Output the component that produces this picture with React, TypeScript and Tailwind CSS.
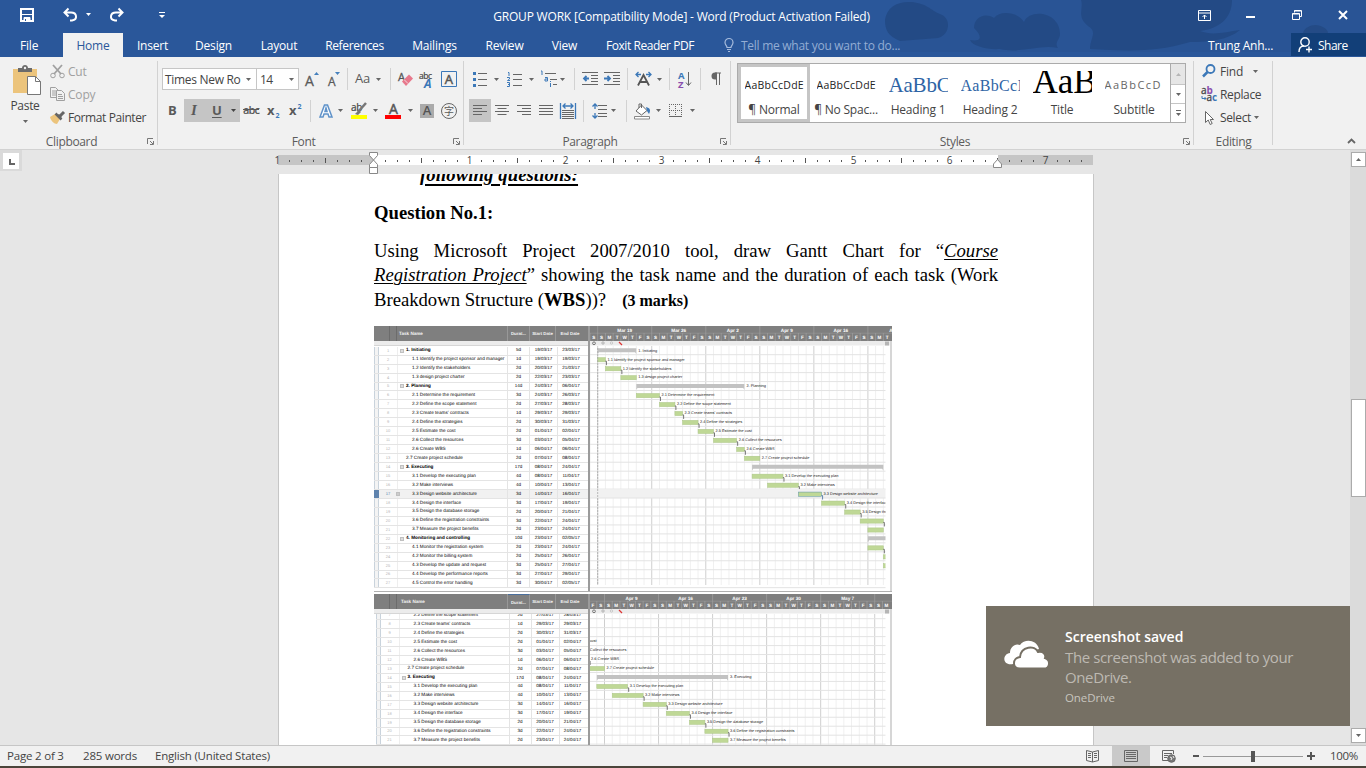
import React from "react";

const DAY = 7.72;
const ROW = 8.96;

type Task = {
  n: number;
  name: string;
  level: 0 | 1 | 2;
  dur: string;
  start: string;
  end: string;
  from: number;
  to: number;
};

const t = (
  n: number,
  name: string,
  level: 0 | 1 | 2,
  dur: string,
  start: string,
  end: string,
  from: number,
  to: number
): Task => ({ n, name, level, dur, start, end, from, to });

const TASKS: Task[] = [
  t(1, "1. Initiating", 0, "5d", "19/03/17", "23/03/17", 0, 5),
  t(2, "1.1 Identify the project sponsor and manager", 2, "1d", "19/03/17", "19/03/17", 0, 1),
  t(3, "1.2 Identify the stakeholders", 2, "2d", "20/03/17", "21/03/17", 1, 3),
  t(4, "1.3 design project charter", 2, "2d", "22/03/17", "23/03/17", 3, 5),
  t(5, "2. Planning", 0, "14d", "24/03/17", "06/04/17", 5, 19),
  t(6, "2.1 Determine the requirement", 2, "3d", "24/03/17", "26/03/17", 5, 8),
  t(7, "2.2 Define the scope statement", 2, "2d", "27/03/17", "28/03/17", 8, 10),
  t(8, "2.3 Create teams' contracts", 2, "1d", "29/03/17", "29/03/17", 10, 11),
  t(9, "2.4 Define the strategies", 2, "2d", "30/03/17", "31/03/17", 11, 13),
  t(10, "2.5 Estimate the cost", 2, "2d", "01/04/17", "02/04/17", 13, 15),
  t(11, "2.6 Collect the resources", 2, "3d", "03/04/17", "05/04/17", 15, 18),
  t(12, "2.6 Create WBS", 2, "1d", "06/04/17", "06/04/17", 18, 19),
  t(13, "2.7 Create project schedule", 1, "2d", "07/04/17", "08/04/17", 19, 21),
  t(14, "3. Executing", 0, "17d", "08/04/17", "24/04/17", 20, 37),
  t(15, "3.1 Develop the executing plan", 2, "4d", "08/04/17", "11/04/17", 20, 24),
  t(16, "3.2 Make interviews", 2, "4d", "10/04/17", "13/04/17", 22, 26),
  t(17, "3.3 Design website architecture", 2, "3d", "14/04/17", "16/04/17", 26, 29),
  t(18, "3.4 Design the interface", 2, "3d", "17/04/17", "19/04/17", 29, 32),
  t(19, "3.5 Design the database storage", 2, "2d", "20/04/17", "21/04/17", 32, 34),
  t(20, "3.6 Define the registration constraints", 2, "3d", "22/04/17", "24/04/17", 34, 37),
  t(21, "3.7 Measure the project benefits", 2, "2d", "23/04/17", "24/04/17", 35, 37),
  t(22, "4. Monitoring and controlling", 0, "10d", "23/04/17", "02/05/17", 35, 45),
  t(23, "4.1 Monitor the registration system", 2, "2d", "23/04/17", "24/04/17", 35, 37),
  t(24, "4.2 Monitor the billing system", 2, "2d", "25/04/17", "26/04/17", 37, 39),
  t(25, "4.3 Develop the update and request", 2, "3d", "25/04/17", "27/04/17", 37, 40),
  t(26, "4.4 Develop the performance reports", 2, "3d", "27/04/17", "29/04/17", 39, 42),
  t(27, "4.5 Control the error handling", 2, "3d", "30/04/17", "02/05/17", 42, 45),
];

const LETTERS = ["S", "M", "T", "W", "T", "F", "S"];

/* ---------- Task sheet and Gantt drawing ---------- */

function TaskRow({ task, selected }: { task: Task; selected: boolean }) {
  return (
    <div
      className={
        "flex h-[8.96px] shrink-0 items-center border-b border-[#e4e4e4] leading-none whitespace-nowrap text-black " +
        (selected ? "bg-[#f1f1f1]" : "")
      }
    >
      <span className={"h-full w-[5px] " + (selected ? "bg-[#5f83ad]" : "border-x border-[#c9d3dc] bg-[#f4f4f4]")} />
      <span className={"w-[18px] text-center text-[4px] " + (selected ? "text-[#4b79ad]" : "text-[#b5b5b5]")}>{task.n}</span>
      <span className="flex h-full w-[9px] items-center justify-end border-l border-[#eeeeee] pr-[2px]">
        {task.level === 0 && <span className="h-[4px] w-[4px] border border-[#c0c0c0] bg-[#ddd]" />}
        {selected && <span className="mr-[4px] h-[4px] w-[4px] shrink-0 border border-[#c0c0c0] bg-[#ccc]" />}
      </span>
      <span
        className={
          "flex h-full w-[102px] items-center border-r border-[#e4e4e4] text-[4.66px] " +
          (task.level === 2 ? "pl-[6px]" : task.level === 0 ? "font-bold" : "")
        }
      >
        {task.name}
      </span>
      <span className="flex h-full w-[22px] items-center justify-center border-r border-[#e4e4e4] text-[4.5px]">{task.dur}</span>
      <span className="flex h-full w-[28px] items-center justify-center border-r border-[#e4e4e4] text-[4.5px]">{task.start}</span>
      <span className="flex h-full w-[26px] items-center justify-center text-[4.5px]">{task.end}</span>
    </div>
  );
}

function Sheet({ tasks, second }: { tasks: Task[]; second?: boolean }) {
  return (
    <div className="flex w-[214px] shrink-0 flex-col overflow-hidden bg-white">
      <div className="flex h-[15px] shrink-0 items-center bg-[#7f7f7f] text-[4.6px] leading-none font-bold whitespace-nowrap text-[#f4f4f4]">
        <span className="h-full w-[16px] border-r border-[#6c6c6c]" />
        <span className="h-full w-[7px] border-r border-[#6c6c6c]" />
        <span className={"flex h-full w-[111px] items-center border-r border-[#989898] pt-[2px] " + (second ? "pl-[4px]" : "pl-[2px]")}>
          Task Name
        </span>
        <span
          className={
            "flex h-full w-[22px] items-center justify-center border-r border-[#989898] pt-[2px] text-[4.4px] " +
            (second ? "border-t border-t-[#4b6f9c]" : "")
          }
        >
          Durat...
        </span>
        <span className="flex h-full w-[26px] items-center justify-center border-r border-[#989898] pt-[2px] text-[4.4px]">Start Date</span>
        <span className="flex h-full w-[28px] items-center justify-center pt-[2px] text-[4.4px]">End Date</span>
      </div>
      <div className="h-[5px] shrink-0 border-b border-[#d6d6d6] bg-[#ececec]" />
      <div className="flex flex-col overflow-hidden">
        <div className={"flex flex-col " + (second ? "mt-[-2.9px] pl-[1.5px]" : "pt-[0.7px]")}>
          {tasks.map((k) => (
            <TaskRow key={k.n} task={k} selected={!second && k.n === 17} />
          ))}
        </div>
      </div>
    </div>
  );
}

function Gantt({
  tasks,
  origin,
  firstRow,
  weeks,
  height,
  rowStart,
}: {
  tasks: Task[];
  origin: number;
  firstRow: number;
  weeks: { day: number; label: string }[];
  height: number;
  rowStart: number;
}) {
  const X = (d: number) => origin + d * DAY;
  const firstDay = Math.ceil(-origin / DAY) - 1;
  const days = Array.from({ length: 40 }, (_, i) => firstDay + i).filter((d) => X(d) < 303);
  const id = "clip" + firstRow;
  return (
    <svg
      width="304"
      height={height}
      className="block shrink-0 bg-white [text-rendering:geometricPrecision]"
      fontFamily="Liberation Sans, sans-serif"
    >
      <defs>
        <clipPath id={id}>
          <rect x="2" y="15" width="295.5" height={height - 15} />
        </clipPath>
      </defs>
      <g clipPath={`url(#${id})`}>
        {days.map((d) => (
          <line key={d} x1={X(d)} x2={X(d)} y1="20" y2={firstRow === 1 ? 259 : height} stroke={d % 7 === 0 ? "#cfcfcf" : "#f0f0f0"} />
        ))}
        {tasks.map((k, i) => {
          const cy = rowStart + i * ROW;
          return (
            <g key={k.n}>
              {k.n === 17 && firstRow === 1 && <rect x="2" y={cy - 4.5} width="296" height={ROW} fill="#f1f1f1" />}
              <line x1="2" x2="298" y1={cy + 4.5} y2={cy + 4.5} stroke="#e3e3e3" />
              {k.level === 0 ? (
                <path
                  d={`M${X(k.from)} ${cy - 2}H${X(k.to)}V${cy + 3.8}L${X(k.to) - 1.2} ${cy + 2}H${X(k.from) + 1.2}L${X(k.from)} ${cy + 3.8}Z`}
                  fill="#c2c2c2"
                />
              ) : (
                <rect
                  x={X(k.from)}
                  y={cy - 1.5}
                  width={(k.to - k.from) * DAY}
                  height="4.2"
                  fill="#bfd896"
                  stroke={k.n === 17 && firstRow === 1 ? "#5b93a0" : "#abc686"}
                  strokeWidth=".5"
                />
              )}
              {k.level !== 0 && ![4, 13, 21].includes(k.n) && (
                <path
                  d={`M${X(k.to)} ${cy + 2}h1v4`}
                  fill="none"
                  stroke={k.n === 17 && firstRow === 1 ? "#3c6aa0" : "#555"}
                  strokeWidth=".8"
                />
              )}
              {X(k.to) < 295 && (
                <text x={X(k.to) + 2} y={cy + 1.4} fontSize="3.9" fill="#222">
                  {k.name}
                </text>
              )}
            </g>
          );
        })}
        {firstRow === 1 && (
          <line x1={X(0)} x2={X(0)} y1="22" y2="259" stroke="#a8a8a8" strokeDasharray="2 1" strokeWidth=".8" />
        )}
      </g>
      <rect x="2" width="302" height="15" fill="#7f7f7f" />
      <rect x="2" y="15" width="302" height="4.5" fill="#ececec" />
      <line x1="2" x2="304" y1="7.2" y2="7.2" stroke="#9a9a9a" strokeWidth=".6" />
      {days.map((d) => (
        <g key={d}>
          <line x1={X(d)} x2={X(d)} y1={d % 7 === 0 ? 0 : 7} y2="15" stroke="#a5a5a5" strokeWidth=".6" />
          {X(d) + 4 > 3 && X(d) + 5 < 304 && (
            <text x={X(d) + 3.9} y="12.8" fontSize="4.6" fontWeight="bold" fill="#fff" textAnchor="middle">
              {LETTERS[((d % 7) + 7) % 7]}
            </text>
          )}
        </g>
      ))}
      {weeks.map((w) => (
        <text key={w.label} x={X(w.day) + 27} y="5.6" fontSize="4.7" fontWeight="bold" fill="#fff" textAnchor="middle">
          {w.label}
        </text>
      ))}
      <circle cx="6" cy="17.3" r="1.4" fill="none" stroke="#777" />
      <circle cx="15" cy="17" r="1.2" fill="none" stroke="#999" strokeWidth=".7" />
      <circle cx="23.5" cy="17" r="1.2" fill="none" stroke="#bbb" strokeWidth=".7" />
      <path d="M31 16l3 3" stroke="#d33" strokeWidth="1.3" />
      <rect x="297" y="15.5" width="4" height="4" fill="#b5b5b5" />
      <rect x="0" width="2" height={height} fill="#9b9b9b" />
      <rect x="302" y="15" width="2" height={height} fill="#d6d6d6" />
    </svg>
  );
}

/* ---------- Small pieces ---------- */

function Caret({ className = "", fill = "#666" }: { className?: string; fill?: string }) {
  return (
    <svg width="5" height="3" viewBox="0 0 5 3" className={"shrink-0 " + className}>
      <path d="M0 0H5L2.5 3Z" fill={fill} />
    </svg>
  );
}

function Ic({ w = 16, h = 16, className = "", children }: { w?: number; h?: number; className?: string; children: React.ReactNode }) {
  return (
    <svg
      width={w}
      height={h}
      viewBox={`0 0 ${w} ${h}`}
      className={"shrink-0 overflow-visible " + className}
      fill="none"
      stroke="#666"
      fontFamily="Open Sans, sans-serif"
    >
      {children}
    </svg>
  );
}

const Sep = ({ className = "" }: { className?: string }) => <span className={"h-[22px] w-px shrink-0 bg-[#d2d2d2] " + className} />;

function Launcher({ className = "" }: { className?: string }) {
  return (
    <Ic w={7} h={7} className={className}>
      <path d="M.5 6V.5H6M3 3l3 3M6.5 3v3.500H3" stroke="#777" />
    </Ic>
  );
}

function GroupLabel({ label, launcher }: { label: string; launcher?: boolean }) {
  return (
    <div className="mt-auto flex h-[16px] w-full shrink-0 items-center">
      <span className={"flex-1 pt-[1px] text-center tracking-[-0.35px] text-[#5c5c5c] " + (launcher ? "-ml-[4px]" : "")}>{label}</span>
      {launcher && <Launcher className="mr-[4px]" />}
    </div>
  );
}

function Lines({ ws, right, center }: { ws: number[]; right?: boolean; center?: boolean }) {
  return (
    <Ic w={14} h={12}>
      {ws.map((w, i) => {
        const x = right ? 14 - w : center ? (14 - w) / 2 : 0;
        return <path key={i} d={`M${x} ${i * 3 + 0.5}h${w}`} />;
      })}
    </Ic>
  );
}

/* ---------- Title bar and tabs ---------- */

function TitleBar() {
  const tabs: [string, string][] = [
    ["Insert", "w-[59px]"],
    ["Design", "w-[63px]"],
    ["Layout", "w-[68px]"],
    ["References", "w-[83px] tracking-[-0.35px]"],
    ["Mailings", "w-[77px]"],
    ["Review", "w-[63px]"],
    ["View", "w-[57px]"],
    ["Foxit Reader PDF", "w-[114px] tracking-[-0.45px]"],
  ];
  return (
    <header className="relative h-[57px] shrink-0 bg-[#2a579a] text-white">
      <svg className="absolute top-0 right-0" width="500" height="57" viewBox="866 0 500 57">
        <rect x="900" width="466" height="52" fill="#27528f" opacity=".5" />
        <g fill="#234a84" opacity=".9">
          <path d="M885 20C887 7 897 1 912 2C928 4 930 10 940 14C952 18 950 35 938 38L900 41C888 36 885 30 885 20Z" />
          <path d="M974 28C974 18 984 12 994 18C1000 10 1018 12 1024 22C1030 8 1060 12 1060 34C1060 40 1054 42 1058 48C1040 44 1020 54 1000 49C988 50 972 46 970 40C980 42 984 38 974 28Z" />
          <path d="M1081 0H1232C1232 14 1224 28 1200 31C1212 36 1226 32 1240 30C1228 40 1210 42 1190 42C1150 54 1120 50 1090 49C1090 38 1098 32 1088 26C1076 16 1084 8 1081 0Z" />
          <path d="M1303 33C1304 28 1310 25 1316 25C1324 26 1328 30 1328 33Z" />
        </g>
      </svg>
      <div className="relative flex h-[33px] items-center">
        <Ic w={14} h={14} className="mt-[8px] ml-[20px] self-start">
          <path d="M1 1h12v12H1z" stroke="#fff" strokeWidth="2" />
          <path d="M2 6.500h10M4 9.500h6V13H4z" fill="#fff" stroke="#fff" />
          <path d="M5.500 11v2" stroke="#2a579a" />
        </Ic>
        <Ic w={15} h={14} className="mt-[-3px] ml-[29px]">
          <path d="M5.500.500L1.500 4.500l4 4M2 4.500h6c6 0 7 7 1 8H7" stroke="#fff" strokeWidth="2" />
        </Ic>
        <Caret fill="#fff" className="mt-[-4px] ml-[8px]" />
        <Ic w={15} h={14} className="mt-[-3px] ml-[18px]">
          <path d="M9.500.500l4 4-4 4M13 4.500H7c-6 0-7 7-1 8h2" stroke="#fff" strokeWidth="2" />
        </Ic>
        <Ic w={6} h={7} className="mt-[-3px] ml-[35px]">
          <path d="M0 .5h6" stroke="#fff" />
          <path d="M0 3h6L3 6z" fill="#fff" stroke="none" />
        </Ic>
        <span className="ml-[308px] w-[417px] text-center text-[12px] tracking-[-0.19px] whitespace-nowrap">
          GROUP WORK [Compatibility Mode] - Word (Product Activation Failed)
        </span>
        <Ic w={13} h={11} className="mt-[-3px] ml-[308px]">
          <path d="M.5.500h12v10H.5zM.5 3h12" stroke="#fff" />
          <path d="M6.500 9V5M4.500 7l2-2 2 2" stroke="#fff" />
        </Ic>
        <span className="ml-[35px] h-[2px] w-[9px] bg-white" />
        <Ic w={10} h={10} className="mt-[-3px] ml-[37px]">
          <path d="M2.500 2.500V.5h7v6h-2M.5 3.500h7v6h-7zM.5 4h7M2 1h7" stroke="#fff" />
        </Ic>
        <Ic w={10} h={10} className="mt-[-3px] ml-[36px]">
          <path d="M1 1l8 8M9 1L1 9" stroke="#fff" strokeWidth="2" />
        </Ic>
      </div>
      <nav className="relative flex h-[24px] items-center text-[12px] tracking-[-0.2px] whitespace-nowrap">
        <span className="w-[63px] pt-[2px] pl-[20px]">File</span>
        <span className="flex h-full w-[60px] items-center justify-center bg-[#f1f1f1] pt-[1px] text-[#2a579a]">Home</span>
        {tabs.map(([label, w]) => (
          <span key={label} className={"shrink-0 pt-[1px] text-center " + w}>
            {label}
          </span>
        ))}
        <Ic w={10} h={14} className="ml-[17px]">
          <path d="M3 9.500C3 7.500 1 7 1 4.500a4 4 0 0 1 8 0C9 7 7 7.500 7 9.500zM3 11.500h4M4 13.500h2" stroke="#a6bbdc" strokeWidth="1.200" />
        </Ic>
        <span className="ml-[7px] w-[467px] pt-[1px] tracking-[-0.27px] text-[#93add4]">Tell me what you want to do...</span>
        <span className="w-[83px] pt-[1px]">Trung Anh...</span>
        <span className="flex h-[23px] flex-1 items-center self-start bg-[#123f78] pl-[7px]">
          <Ic w={15} h={16}>
            <circle cx="7" cy="5" r="4.200" stroke="#fff" strokeWidth="1.400" />
            <path d="M1 15c0-4 2-6 5-6M8 12.500h6M11 9.500v6" stroke="#fff" strokeWidth="1.400" />
          </Ic>
          <span className="ml-[5px] pt-[2px] tracking-[-0.5px]">Share</span>
        </span>
      </nav>
    </header>
  );
}

/* ---------- Ribbon ---------- */

function Clipboard() {
  return (
    <section className="flex w-[158px] shrink-0 flex-col">
      <div className="flex h-[74px]">
        <div className="flex w-[50px] flex-col items-center pt-[8px]">
          <Ic w={29} h={31} className="ml-[4px]">
            <path d="M0 4h24v24H0z" fill="#ecc47c" stroke="none" />
            <path d="M5 6V3h4c0-4 6-4 6 0h4v4H5z" fill="#6b6b6b" stroke="none" />
            <circle cx="12" cy="3" r="1.200" fill="#f1f1f1" stroke="none" />
            <path d="M14.500 11.500h8l5 5v13h-13z" fill="#fff" stroke="#777" />
            <path d="M22.500 11.500v5h5" stroke="#777" />
          </Ic>
          <span className="mt-[1px] leading-[18px] tracking-[-0.3px] text-[#444]">Paste</span>
          <Caret className="mt-[5px]" />
        </div>
        <div className="flex flex-col pt-[3px]">
          <div className="flex h-[23px] items-center gap-[3px] text-[#a0a0a0]">
            <Ic w={15} h={15}>
              <path d="M3 1l8 9M12 1L4 10" stroke="#a0a0a0" strokeWidth="1.800" />
              <circle cx="3" cy="11.500" r="2.300" stroke="#a0a0a0" />
              <circle cx="12" cy="11.500" r="2.300" stroke="#a0a0a0" />
            </Ic>
            <span className="pt-[1px]">Cut</span>
          </div>
          <div className="flex h-[23px] items-center gap-[3px] text-[#a0a0a0]">
            <Ic w={15} h={15}>
              <path d="M.5.500h5l3 3v7h-8zM2 4h4M2 6h4M2 8h4" stroke="#a0a0a0" />
              <path d="M6.500 3.500h5l3 3v7h-8z" fill="#f1f1f1" stroke="#a0a0a0" />
              <path d="M8 7.500h4M8 9.500h5M8 11.500h5" stroke="#a0a0a0" />
            </Ic>
            <span className="pt-[1px]">Copy</span>
          </div>
          <div className="flex h-[23px] items-center gap-[3px] text-[#444]">
            <Ic w={15} h={15}>
              <path d="M0 7l5-3 5 5-3 5c-3 0-6-3-7-7z" fill="#ecc47c" stroke="none" />
              <path d="M5.500 3.500l6 6M8 5l3 3" stroke="#666" strokeWidth="2.500" />
              <path d="M9 7l5-5" stroke="#666" strokeWidth="3" />
            </Ic>
            <span className="pt-[1px] tracking-[-0.4px]">Format Painter</span>
          </div>
        </div>
      </div>
      <GroupLabel label="Clipboard" launcher />
    </section>
  );
}

function FontGroup() {
  return (
    <section className="flex w-[306px] shrink-0 flex-col">
      <div className="mt-[11px] flex h-[22px] items-center">
        <div className="ml-[4px] flex h-[22px] w-[95px] items-center justify-between border border-[#c6c6c6] bg-white pr-[5px] pl-[2px] whitespace-nowrap">
          <span className="pt-[1px] tracking-[-0.3px]">Times New Ro</span>
          <Caret />
        </div>
        <div className="ml-[-1px] flex h-[22px] w-[43px] items-center justify-between border border-[#c6c6c6] bg-white pr-[4px] pl-[3px]">
          <span className="pt-[1px] tracking-[-0.6px]">14</span>
          <Caret />
        </div>
        <Ic w={14} h={17} className="ml-[6px]">
          <text x="0" y="14.500" fontSize="14" fill="#5a5a5a" stroke="#5a5a5a" strokeWidth=".3">A</text>
          <path d="M9 4l2.500-3L14 4z" fill="#4580bd" stroke="none" />
        </Ic>
        <Ic w={14} h={17} className="ml-[8px]">
          <text x="1" y="14.500" fontSize="12" fill="#5a5a5a" stroke="#5a5a5a" strokeWidth=".3">A</text>
          <path d="M8 1l2.500 3L13 1z" fill="#4580bd" stroke="none" />
        </Ic>
        <Sep className="ml-[6px]" />
        <span className="ml-[7px] w-[17px] text-[13px] text-[#5a5a5a]">Aa</span>
        <Caret className="ml-[4px]" />
        <Sep className="ml-[9px]" />
        <Ic w={15} h={16} className="ml-[7px]">
          <text x="0" y="10" fontSize="11" fill="#555" stroke="#555" strokeWidth=".3">A</text>
          <path d="M4 10.500l7-7 4 4-7 7.500z" fill="#e8788c" stroke="none" />
          <path d="M6 8.500l4 4" stroke="#f1f1f1" strokeWidth=".8" />
        </Ic>
        <Ic w={15} h={17} className="ml-[6px]">
          <text x="0" y="8" fontSize="8.500" letterSpacing="-.4" fill="#444" stroke="#444" strokeWidth=".2">abc</text>
          <text x="5" y="17" fontSize="12" fontWeight="bold" fontStyle="italic" fill="#3c78b8" stroke="none">A</text>
        </Ic>
        <Ic w={16} h={16} className="ml-[7px]">
          <path d="M.5.500h15v15H.5z" stroke="#3c78b8" />
          <text x="3.700" y="13" fontSize="13" fill="#555" stroke="#555" strokeWidth=".5">A</text>
        </Ic>
      </div>
      <div className="mt-[9px] flex h-[23px] items-center text-[#5a5a5a]">
        <span className="ml-[10px] w-[16px] text-[13px] font-bold">B</span>
        <div className="flex h-[23px] w-[56px] items-center bg-[#c5c5c5]">
          <span className="ml-[7px] w-[15px] font-['Liberation_Serif'] text-[15px] font-bold italic">I</span>
          <span className="ml-[6px] w-[9px] text-[13px] font-bold underline underline-offset-2">U</span>
          <Caret className="ml-[10px]" fill="#444" />
        </div>
        <span className="ml-[3px] w-[17px] text-[11px] font-semibold tracking-[-0.9px] line-through">abc</span>
        <Ic w={14} h={16} className="ml-[7px]">
          <text x="0" y="11.500" fontSize="13" fontWeight="bold" fill="#5a5a5a" stroke="none">x</text>
          <text x="8.500" y="15" fontSize="7" fontWeight="bold" fill="#3c78b8" stroke="none">2</text>
        </Ic>
        <Ic w={14} h={16} className="ml-[8px]">
          <text x="0" y="11.500" fontSize="13" fontWeight="bold" fill="#5a5a5a" stroke="none">x</text>
          <text x="8.500" y="6" fontSize="7" fontWeight="bold" fill="#3c78b8" stroke="none">2</text>
        </Ic>
        <Sep className="ml-[7px]" />
        <Ic w={14} h={16} className="ml-[8px]">
          <path d="M1 14L5.500 2h3L13 14h-3l-1-3H5l-1 3zM6 8.500h2L7 5z" fill="#fff" stroke="#5f92c9" strokeWidth="1.500" />
        </Ic>
        <Caret className="ml-[5px]" />
        <Ic w={17} h={17} className="ml-[7px]">
          <text x="1" y="8.500" fontSize="10" letterSpacing="-.3" fill="#444" stroke="#444" strokeWidth=".2">ab</text>
          <path d="M16 1L8 10" stroke="#777" strokeWidth="2.500" />
          <path d="M5 12l4-4 2 2-3 3z" fill="#777" stroke="none" />
          <path d="M1 13h16v4H1z" fill="#ffff00" stroke="none" />
        </Ic>
        <Caret className="ml-[6px]" />
        <Ic w={17} h={17} className="ml-[7px]">
          <text x="4" y="12" fontSize="14" fill="#555" stroke="#555" strokeWidth=".5">A</text>
          <path d="M0 13h16v4H0z" fill="#f00" stroke="none" />
        </Ic>
        <Caret className="ml-[6px]" />
        <span className="ml-[7px] flex h-[14px] w-[14px] shrink-0 items-center justify-center bg-[#ababab] text-[13px] font-semibold text-[#555]">A</span>
        <span className="ml-[7px] flex h-[16px] w-[16px] shrink-0 items-center justify-center rounded-full border border-[#666] font-['Noto_Sans_CJK_SC'] text-[10px] leading-none tracking-normal">
          字
        </span>
      </div>
      <GroupLabel label="Font" launcher />
    </section>
  );
}

function ParagraphGroup() {
  return (
    <section className="flex w-[267px] shrink-0 flex-col">
      <div className="mt-[11px] flex h-[22px] items-center">
        <Ic w={14} h={16} className="ml-[9px]">
          <path d="M5 2.500h9M5 8.500h9M5 14.500h9" />
          <path d="M0 1h3v3H0zM0 7h3v3H0zM0 13h3v3H0z" fill="#3c78b8" stroke="none" />
        </Ic>
        <Caret className="ml-[7px]" />
        <Ic w={15} h={16} className="ml-[8px]">
          <path d="M6 3.500h9M6 8.500h9M6 14.500h9" />
          <path d="M1 1.500h1V5M0 6.500h2.500v1.500L.5 9.500H3M0 11.500h2.500v4H0M1 13.500h1" stroke="#3c78b8" />
        </Ic>
        <Caret className="ml-[7px]" />
        <Ic w={17} h={16} className="ml-[6px]">
          <path d="M5 2.500h11M10 8.500h7M13 13.500h4" />
          <path d="M1 0h1v4M5 6.500h2.500V10H5V8h2M10.500 10v1M10.500 12v4" stroke="#3c78b8" />
        </Ic>
        <Caret className="ml-[3px]" />
        <Sep className="ml-[9px]" />
        <Ic w={16} h={14} className="ml-[7px]">
          <path d="M0 .5h16M9 3.500h7M9 6.500h7M9 9.500h7M0 12.500h16" />
          <path d="M7 6.500H2M4.500 4L2 6.500 4.500 9" stroke="#3c78b8" strokeWidth="1.800" />
        </Ic>
        <Ic w={16} h={14} className="ml-[6px]">
          <path d="M0 .5h16M9 3.500h7M9 6.500h7M9 9.500h7M0 12.500h16" />
          <path d="M0 6.500h5.500M3.500 4L6 6.500 3.500 9" stroke="#3c78b8" strokeWidth="1.800" />
        </Ic>
        <Sep className="ml-[7px]" />
        <Ic w={17} h={16} className="ml-[7px]">
          <path d="M3 14.500L8.500 4 14 14.500M5 11h7" stroke="#555" strokeWidth="1.800" />
          <path d="M6 3.500H1.500M3.500 1L1 3.500 3.500 6M11 3.500h4.500M13.500 1L16 3.500 13.500 6" stroke="#3c78b8" strokeWidth="1.300" />
        </Ic>
        <Caret className="ml-[5px]" />
        <Sep className="ml-[7px]" />
        <Ic w={14} h={17} className="ml-[8px]">
          <text x="0" y="8" fontSize="9.500" fontWeight="bold" fill="#3c78b8" stroke="none">A</text>
          <text x="0" y="16.500" fontSize="9.500" fontWeight="bold" fill="#8a4fae" stroke="none">Z</text>
          <path d="M10.500 1v13M8 11.500l2.500 3 2.500-3" />
        </Ic>
        <Sep className="ml-[8px]" />
        <Ic w={11} h={14} className="ml-[10px]">
          <path d="M5.500 1v12M8.500 1v12M4 1h6" />
          <path d="M6 .5H4a3.500 3.500 0 0 0 0 7h2z" fill="#666" stroke="none" />
        </Ic>
      </div>
      <div className="mt-[9px] flex h-[23px] items-center">
        <span className="ml-[5px] flex h-[23px] w-[22px] items-center justify-center bg-[#c5c5c5]">
          <Lines ws={[14, 9, 14, 9]} />
        </span>
        <span className="flex w-[22px] justify-center">
          <Lines ws={[14, 9, 14, 9]} center />
        </span>
        <span className="flex w-[22px] justify-center">
          <Lines ws={[14, 9, 14, 9]} right />
        </span>
        <span className="flex w-[22px] justify-center">
          <Lines ws={[14, 14, 14, 14]} />
        </span>
        <Ic w={16} h={16} className="ml-[3px]">
          <path d="M.5 0v16M15.500 0v16M3 3h10M5.500.500L3 3l2.500 2.500M10.500.500L13 3l-2.500 2.500" stroke="#3c78b8" strokeWidth="1.300" />
          <path d="M2 7.500h12M2 9.500h12M2 11.500h12M2 13.500h12M2 15.500h12" />
        </Ic>
        <Sep className="ml-[7px]" />
        <Ic w={15} h={16} className="ml-[8px]">
          <path d="M6 2.500h9M6 6.500h9M6 10.500h9M6 13.500h9" />
          <path d="M3 1v5M.5 3.500L3 1l2.500 2.500M3 15v-5M.5 12.500L3 15l2.500-2.500" stroke="#3c78b8" strokeWidth="1.300" />
        </Ic>
        <Caret className="ml-[4px]" />
        <Sep className="ml-[10px]" />
        <Ic w={17} h={16} className="ml-[7px]">
          <path d="M2 8l5.500-6L13 7.500 7.500 12zM5 5V1h2.500v4" fill="#fff" />
          <path d="M12 4c4 1 5 3 3 7l-2-3z" fill="#3c78b8" stroke="none" />
          <path d="M.5 13.500h15V16H.5z" stroke="#888" fill="#fff" />
        </Ic>
        <Caret className="ml-[5px]" />
        <Ic w={13} h={13} className="ml-[8px]">
          <path d="M.5 0v12M12.500 0v12M6.500 0v12M0 .5h13M0 6.500h13" strokeDasharray="1 1" />
          <path d="M0 12.500h13" />
        </Ic>
        <Caret className="ml-[8px]" />
      </div>
      <GroupLabel label="Paragraph" launcher />
    </section>
  );
}

function StylesGroup() {
  const items: { label: string; sample: string; cls: string }[] = [
    { label: "¶ Normal", sample: "AaBbCcDdE", cls: "text-[10.5px] text-[#222] tracking-[0.25px]" },
    { label: "¶ No Spac...", sample: "AaBbCcDdE", cls: "text-[10.5px] text-[#222] tracking-[0.25px]" },
    { label: "Heading 1", sample: "AaBbC", cls: "font-['Liberation_Serif'] text-[21px] text-[#2e64a5]" },
    { label: "Heading 2", sample: "AaBbCcI", cls: "font-['Liberation_Serif'] text-[16px] tracking-[0.3px] text-[#2e64a5]" },
    { label: "Title", sample: "AaB", cls: "mt-[-9px] font-['Liberation_Serif'] text-[35px] leading-none tracking-[0px] text-black" },
    { label: "Subtitle", sample: "AaBbCcD", cls: "text-[11px] text-[#666] tracking-[1.5px]" },
  ];
  return (
    <section className="flex w-[463px] shrink-0 flex-col">
      <div className="mt-[6px] ml-[6px] flex h-[60px] w-[449px] border border-[#ababab] bg-white">
        <div className="flex flex-1 overflow-hidden">
          {items.map((it, i) => (
            <div
              key={it.label}
              className={
                "flex h-[58px] w-[72px] shrink-0 flex-col items-center " +
                (i === 0 ? "border-[3px] border-[#c5c5c5] pt-[4px]" : "pt-[7px]")
              }
            >
              <div className="flex h-[28px] w-[59px] shrink-0 items-center overflow-hidden pt-[1px] whitespace-nowrap">
                <span className={it.cls}>{it.sample}</span>
              </div>
              <span className="leading-[22px] whitespace-nowrap text-[#444]">{it.label}</span>
            </div>
          ))}
        </div>
        <div className="flex w-[15px] flex-col border-l border-[#ababab]">
          <div className="flex h-[20px] items-center justify-center bg-[#e6e6e6]">
            <Caret className="rotate-180" fill="#b5b5b5" />
          </div>
          <div className="flex h-[20px] items-center justify-center border-y border-[#c5c5c5]">
            <Caret />
          </div>
          <div className="flex flex-1 flex-col items-center justify-center gap-[2px]">
            <span className="h-px w-[5px] bg-[#666]" />
            <Caret />
          </div>
        </div>
      </div>
      <GroupLabel label="Styles" launcher />
    </section>
  );
}

function EditingGroup() {
  return (
    <section className="flex w-[79px] shrink-0 flex-col">
      <div className="flex flex-col pt-[3px] pl-[8px] text-[#444]">
        <div className="flex h-[23px] items-center">
          <Ic w={14} h={15}>
            <circle cx="8.500" cy="5" r="4" stroke="#3c78b8" strokeWidth="1.800" />
            <path d="M5.500 8l-4.500 4.500" stroke="#3c78b8" strokeWidth="2.500" />
          </Ic>
          <span className="ml-[4px] w-[23px] pt-[1px]">Find</span>
          <Caret className="ml-[10px]" />
        </div>
        <div className="flex h-[23px] items-center">
          <Ic w={17} h={17} className="ml-[-1px]">
            <text x="0" y="7.500" fontSize="10" fill="#444" stroke="#444" strokeWidth=".3">a</text>
            <text x="5.500" y="7.500" fontSize="10" fontWeight="bold" fill="#8a4fae" stroke="none">b</text>
            <text x="5.500" y="15" fontSize="10" fill="#444" stroke="#444" strokeWidth=".3">a</text>
            <text x="11" y="15" fontSize="10" fontWeight="bold" fill="#3c78b8" stroke="none">c</text>
            <path d="M1 10v2.500h4M3.500 11l1.500 1.500L3.500 14" stroke="#3c78b8" />
          </Ic>
          <span className="ml-[2px] pt-[1px] tracking-[-0.35px]">Replace</span>
        </div>
        <div className="flex h-[23px] items-center">
          <Ic w={14} h={16}>
            <path d="M3.500 1.500v11l2.700-2.500 2 4.500 2-1-2-4h3.300z" fill="#fff" />
          </Ic>
          <span className="ml-[4px] w-[31px] pt-[1px] tracking-[-0.35px]">Select</span>
          <Caret className="ml-[3px]" />
        </div>
      </div>
      <GroupLabel label="Editing" />
    </section>
  );
}

function Ribbon() {
  const Div = () => <span className="-ml-px mt-[4px] h-[84px] w-px shrink-0 bg-[#d2d2d2]" />;
  return (
    <div className="flex h-[93px] shrink-0 border-b border-[#d2d2d2] bg-[#f1f1f1] text-[12px] tracking-[-0.2px] text-[#444]">
      <Clipboard />
      <Div />
      <FontGroup />
      <Div />
      <ParagraphGroup />
      <Div />
      <StylesGroup />
      <Div />
      <EditingGroup />
      <Div />
      <Ic w={9} h={6} className="mt-auto mr-[10px] mb-[5px] ml-auto">
        <path d="M1 5l3.500-3.500L8 5" strokeWidth="1.800" />
      </Ic>
    </div>
  );
}

/* ---------- Document ---------- */

function Ruler() {
  const ticks = Array.from({ length: 68 }, (_, i) => i - 8);
  return (
    <svg width="816" height="24" viewBox="278 150 816 24" className="block shrink-0 overflow-visible" fontFamily="Open Sans, sans-serif">
      <rect x="278" y="155" width="96" height="10" fill="#c5c5c5" />
      <rect x="374" y="155" width="624" height="10" fill="#fff" />
      <rect x="998" y="155" width="95" height="10" fill="#c5c5c5" />
      {ticks.map((i) => {
        const x = Math.round(373.5 + i * 12) - 1;
        if (i === 0 || x < 280 || x > 1086) return null;
        if (i % 8 === 0)
          return (
            <text key={i} x={x + 0.5} y="164" fontSize="10" textAnchor="middle" fill="#444">
              {Math.abs(i / 8)}
            </text>
          );
        return <rect key={i} x={x} y={i % 4 === 0 ? 158 : 160} width="1" height={i % 4 === 0 ? 5 : 2} fill="#555" />;
      })}
      <text x="274.500" y="164" fontSize="10" fill="#444">1</text>
      <g fill="#fff" stroke="#888">
        <path d="M369.500 152.500h8v3l-4 4.500-4-4.500zM373.500 160l4 4.500v3h-8v-3zM369.500 167.500h8v6h-8z" />
        <path d="M997.500 159.500l4 4.500v3.500h-8v-3.500z" />
      </g>
    </svg>
  );
}

function Picture({ children, className }: { children: React.ReactNode; className: string }) {
  return (
    <div
      className={
        "flex w-[518px] shrink-0 overflow-hidden font-['Liberation_Sans'] [text-rendering:geometricPrecision] " + className
      }
    >
      {children}
    </div>
  );
}

function Page() {
  return (
    <article className="flex h-[571px] w-[816px] shrink-0 flex-col overflow-hidden border-x border-[#c6c6c6] bg-white pl-[95px] font-['Liberation_Serif'] text-[18.67px] leading-[24px] text-black">
      <p className="mt-[-11px] pl-[46px] font-bold tracking-[0.1px] italic underline decoration-[1.5px] underline-offset-[3px]">
        following questions:
      </p>
      <p className="mt-[14px] font-bold">Question No.1:</p>
      <div className="mt-[14px] h-[73px] w-[624px] leading-[24.4px] whitespace-nowrap">
        <p className="[text-align-last:justify]">
          Using Microsoft Project 2007/2010 tool, draw Gantt Chart for “
          <i className="underline decoration-1 underline-offset-2">Course</i>
        </p>
        <p className="[text-align-last:justify]">
          <i className="underline decoration-1 underline-offset-2">Registration Project</i>” showing the task name and the duration of
          each task (Work
        </p>
        <p>
          Breakdown Structure (<b>WBS</b>))?<b className="ml-[16px] text-[16px]">(3 marks)</b>
        </p>
      </div>
      <Picture className="mt-[14px] h-[266px] border-b border-[#b0b0b0]">
        <div className="flex h-[262px] flex-col border-b border-[#c0c0c0]">
          <Sheet tasks={TASKS} />
        </div>
        <Gantt
          tasks={TASKS}
          origin={9.7}
          firstRow={1}
          height={265}
          rowStart={24.2}
          weeks={[
            { day: 0, label: "Mar 19" },
            { day: 7, label: "Mar 26" },
            { day: 14, label: "Apr 2" },
            { day: 21, label: "Apr 9" },
            { day: 28, label: "Apr 16" },
            { day: 34.5, label: "A" },
          ]}
        />
      </Picture>
      <Picture className="mt-[2px] h-[152px]">
        <Sheet tasks={TASKS.slice(6, 21)} second />
        <Gantt
          tasks={TASKS.slice(6, 21)}
          origin={-145.6}
          firstRow={7}
          height={152}
          rowStart={20.2}
          weeks={[
            { day: 21, label: "Apr 9" },
            { day: 28, label: "Apr 16" },
            { day: 35, label: "Apr 23" },
            { day: 42, label: "Apr 30" },
            { day: 49, label: "May 7" },
          ]}
        />
      </Picture>
    </article>
  );
}

function ScrollBar() {
  return (
    <div className="flex w-[16px] shrink-0 flex-col items-center bg-[#dbdbdb] pt-[2px]">
      <div className="flex h-[15px] w-[15px] items-center justify-center border border-[#ababab] bg-white">
        <Caret className="rotate-180" />
      </div>
      <div className="mt-[232px] h-[98px] w-[15px] border border-[#ababab] bg-white" />
      <div className="mt-auto mb-[2px] flex h-[15px] w-[15px] items-center justify-center border border-[#ababab] bg-white">
        <Caret />
      </div>
    </div>
  );
}

function StatusBar() {
  return (
    <footer className="flex h-[21px] shrink-0 items-center border-t border-[#c6c6c6] bg-[#f1f1f1] text-[11.5px] tracking-[-0.2px] whitespace-nowrap text-[#444]">
      <span className="w-[76px] pl-[7px]">Page 2 of 3</span>
      <span className="w-[72px] pl-[7px]">285 words</span>
      <span className="flex-1 pl-[7px]">English (United States)</span>
      <Ic w={13} h={12} className="mr-[13px]">
        <path d="M6.500 2v10M.5.500L6.500 2l6-1.500v10L6.500 12l-6-1.500zM2 3.500h3M2 5.500h3M2 7.500h3M8 3.500h3M8 5.500h3M8 7.500h3" />
      </Ic>
      <span className="flex h-full w-[38px] items-center justify-center bg-[#c9c9c9]">
        <Ic w={14} h={12}>
          <path d="M.5.500h13v11H.5zM2 2.500h10M2 4.500h10M2 6.500h10M2 8.500h10" />
        </Ic>
      </span>
      <Ic w={14} h={13} className="ml-[12px]">
        <path d="M11.500 4V.5H.5v10H6M2 3.500h8M2 5.500h4M2 7.500h3" />
        <circle cx="9.500" cy="8.500" r="3.800" fill="#777" stroke="#666" />
        <path d="M8 7l2 1-1 2M11 6l1 2" stroke="#f1f1f1" />
      </Ic>
      <span className="ml-[17px] h-[2px] w-[6px] bg-[#555]" />
      <span className="ml-[4px] flex h-[11px] w-[100px] items-center">
        <span className="h-px w-[48px] bg-[#999]" />
        <span className="h-[11px] w-[4px] bg-[#555]" />
        <span className="h-px flex-1 bg-[#999]" />
      </span>
      <Ic w={8} h={8} className="ml-[4px]">
        <path d="M4 0v8M0 4h8" stroke="#555" strokeWidth="2" />
      </Ic>
      <span className="mr-[8px] ml-[15px] w-[28px] tracking-[-0.3px]">100%</span>
    </footer>
  );
}

function Toast() {
  return (
    <aside className="absolute top-[606px] left-[986px] flex h-[120px] w-[364px] bg-[#767064] text-white">
      <Ic w={46} h={30} className="mt-[34px] ml-[18px]">
        <path
          d="M9 24C-2 26-2 14 6 13C6 7 11 3 16 5C21-2 33 0 35 9L20 14L11 24Z"
          fill="#fff"
          stroke="none"
        />
        <path d="M16 28.500C8 28.500 8 18 16 17C17 6 31 5 34 12C40 11 42 15 41 18C47 20 46 28.500 40 28.500Z" fill="#fff" stroke="#767064" strokeWidth="2" />
      </Ic>
      <div className="ml-[15px] flex flex-col pt-[21px] whitespace-nowrap">
        <span className="text-[14px] leading-[20px] font-semibold">Screenshot saved</span>
        <span className="text-[15px] leading-[20px] tracking-[-0.38px] text-[#bdb9b2]">The screenshot was added to your</span>
        <span className="text-[15px] leading-[20px] tracking-[-0.38px] text-[#bdb9b2]">OneDrive.</span>
        <span className="text-[11.5px] leading-[22px] tracking-[-0.1px] text-[#c8c5bf]">OneDrive</span>
      </div>
    </aside>
  );
}

export default function App() {
  return (
    <div className="relative flex h-[768px] w-[1366px] flex-col overflow-hidden bg-[#e6e6e6] font-['Open_Sans','Noto_Sans',sans-serif]">
      <TitleBar />
      <Ribbon />
      <main className="flex h-[595px] shrink-0 overflow-hidden">
        <div className="w-[278px] shrink-0">
          <div className="flex h-[21px] w-[22px] items-center bg-[#dadada] pl-[3px]">
            <span className="flex h-[16px] w-[16px] items-center justify-center bg-white pt-[2px] pl-[1px]">
              <svg width="6" height="6">
                <path d="M1 0v5h5" fill="none" stroke="#666" strokeWidth="2" />
              </svg>
            </span>
          </div>
        </div>
        <div className="flex w-[816px] shrink-0 flex-col">
          <Ruler />
          <Page />
        </div>
        <div className="flex-1" />
        <ScrollBar />
      </main>
      <StatusBar />
      <div className="h-[2px] shrink-0 bg-[#4b453b]" />
      <Toast />
    </div>
  );
}
